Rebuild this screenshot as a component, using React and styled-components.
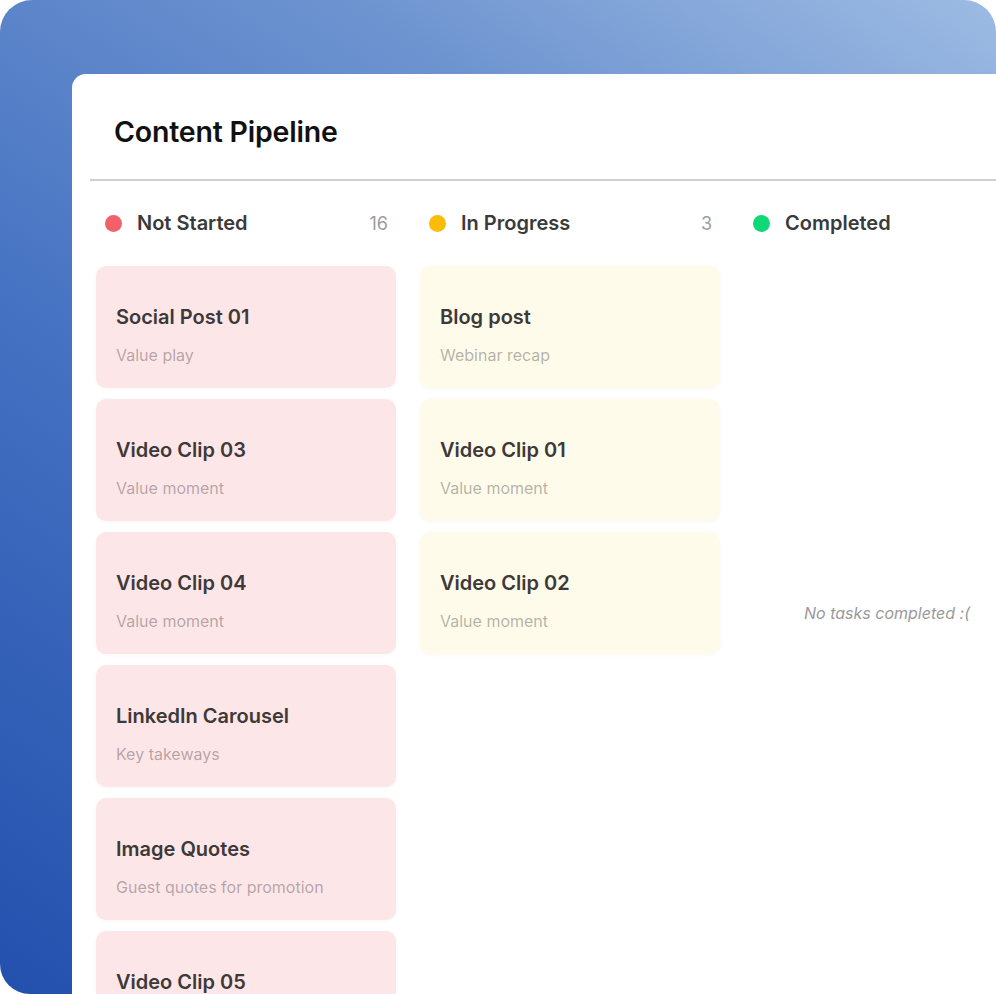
import styled, { createGlobalStyle } from 'styled-components';

const GlobalStyle = createGlobalStyle`
    html, body {
        margin: 0;
        padding: 0;
        background: #ffffff;
        font-family: Inter, "Noto Sans", "Liberation Sans", sans-serif;
    }
`

const Frame = styled.div`
    width: 996px;
    height: 994px;
    box-sizing: border-box;
    padding: 74px 0 0 72px;
    display: flex;
    overflow: hidden;
    border-radius: 32px 32px 0 30px;
    background: linear-gradient(
        214deg,
        #9dbbe3 0%,
        #6e94d0 26%,
        #4572c2 58%,
        #2350ad 100%
    );
`

const Panel = styled.div`
    flex: 1;
    background: #ffffff;
    border-radius: 14px 0 0 0;
    display: flex;
    flex-direction: column;
    overflow: hidden;
`

const Header = styled.div`
    height: 105px;
    box-sizing: border-box;
    padding: 10px 0 0 42px;
    flex-shrink: 0;
    display: flex;
    align-items: center;
`

const Title = styled.h1`
    margin: 0;
    font-size: 28.5px;
    font-weight: 600;
    letter-spacing: -0.2px;
    color: #111111;
`

const Divider = styled.div`
    flex-shrink: 0;
    margin-left: 18px;
    height: 2px;
    background: #d0d0d0;
`

const Board = styled.div`
    flex-shrink: 0;
    display: flex;
    gap: 24px;
    padding: 20px 0 0 24px;
`

const Column = styled.div`
    flex: 0 0 300px;
    display: flex;
    flex-direction: column;
`

const ColumnHeader = styled.div`
    height: 44px;
    margin-bottom: 21px;
    display: flex;
    align-items: center;
    padding: 0 8px 0 9px;
`

const Dot = styled.span`
    width: 17px;
    height: 17px;
    border-radius: 50%;
    background: ${p => p.$color};
    margin-right: 15px;
    flex-shrink: 0;
`

const ColumnName = styled.span`
    flex: 1;
    font-size: 20px;
    font-weight: 600;
    color: #3a3a3a;
`

const Count = styled.span`
    font-size: 18px;
    color: #9c9c9c;
`

const CardList = styled.div`
    display: flex;
    flex-direction: column;
    gap: 11px;
`

const Card = styled.div`
    height: 122px;
    flex-shrink: 0;
    box-sizing: border-box;
    padding: 39px 20px 0;
    border-radius: 10px;
    background: ${p => p.$bg};
    box-shadow: 0 1px 4px rgba(0, 0, 0, 0.035);
`

const CardTitle = styled.div`
    font-size: 20px;
    line-height: 24px;
    font-weight: 600;
    color: #3d3939;
`

const CardSub = styled.div`
    margin-top: 16px;
    font-size: 16px;
    line-height: 20px;
    color: rgba(50, 40, 40, 0.36);
`

const EmptyState = styled.div`
    height: 694px;
    display: flex;
    align-items: center;
    justify-content: center;
    padding-right: 14px;
    font-size: 16px;
    font-style: italic;
    color: #9a9a9a;
`

const columns = [
    {
        name: 'Not Started',
        color: '#f4606a',
        bg: '#fde6e8',
        count: 16,
        cards: [
            ['Social Post 01', 'Value play'],
            ['Video Clip 03', 'Value moment'],
            ['Video Clip 04', 'Value moment'],
            ['LinkedIn Carousel', 'Key takeways'],
            ['Image Quotes', 'Guest quotes for promotion'],
            ['Video Clip 05', 'Value moment'],
        ],
    },
    {
        name: 'In Progress',
        color: '#fbbc06',
        bg: '#fefbea',
        count: 3,
        cards: [
            ['Blog post', 'Webinar recap'],
            ['Video Clip 01', 'Value moment'],
            ['Video Clip 02', 'Value moment'],
        ],
    },
    {
        name: 'Completed',
        color: '#10d877',
        bg: '#eafbf1',
        cards: [],
    },
];

export default function App() {
    return (
        <>
            <GlobalStyle />
            <Frame>
                <Panel>
                    <Header>
                        <Title>Content Pipeline</Title>
                    </Header>
                    <Divider />
                    <Board>
                        {columns.map(col => (
                            <Column key={col.name}>
                                <ColumnHeader>
                                    <Dot $color={col.color} />
                                    <ColumnName>{col.name}</ColumnName>
                                    {col.count && <Count>{col.count}</Count>}
                                </ColumnHeader>
                                {col.cards.length ? (
                                    <CardList>
                                        {col.cards.map(([title, sub]) => (
                                            <Card key={title} $bg={col.bg}>
                                                <CardTitle>{title}</CardTitle>
                                                <CardSub>{sub}</CardSub>
                                            </Card>
                                        ))}
                                    </CardList>
                                ) : (
                                    <EmptyState>No tasks completed :(</EmptyState>
                                )}
                            </Column>
                        ))}
                    </Board>
                </Panel>
            </Frame>
        </>
    )
}
